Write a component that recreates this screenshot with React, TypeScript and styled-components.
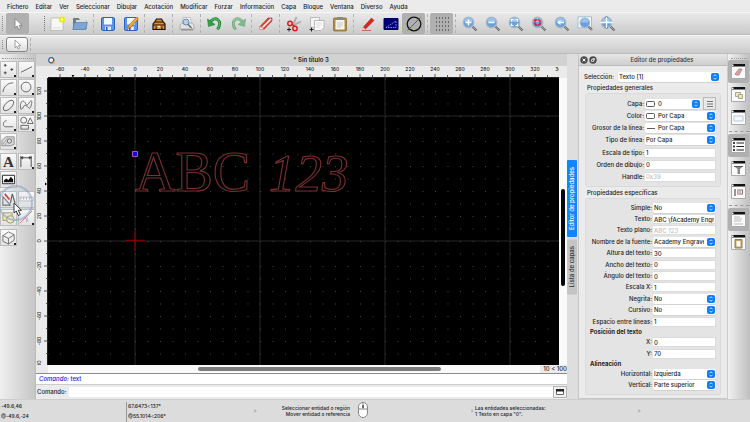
import React from "react";
import styled, { createGlobalStyle, css } from "styled-components";

const Global = createGlobalStyle`
  *, *::before, *::after { box-sizing: border-box; }
  body { margin: 0; background: #dcdcdc; }
  button, input, select { font: inherit; color: inherit; margin: 0; padding: 0; border: 0; background: none; border-radius: 0; }
`;

const Page = styled.div`
  display: flex;
  flex-direction: column;
  min-height: 100vh;
  overflow: hidden;
  font-family: Inter, "Liberation Sans", sans-serif;
  font-size: 6px;
  font-weight: 500;
  line-height: 8px;
  color: #1c1c1c;
`;

/* ---------- menu bar and toolbars ---------- */

const MenuBar = styled.nav`
  display: flex;
  gap: 7px;
  height: 12px;
  padding: 1px 7px 0;
  background: #ebebeb;
`;

const MenuItem = styled.button`
  line-height: 9px;
  white-space: nowrap;
`;

const Toolbar = styled.div`
  display: flex;
  align-items: stretch;
  height: 23px;
  padding-left: 2px;
  background: linear-gradient(#e9e9e9, #cbcbcb);
  border-top: 1px solid #f5f5f5;
  border-bottom: 1px solid #bdbdbd;
`;

const OptionsBar = styled(Toolbar)`
  height: 19px;
  padding: 1px 2px;
`;

const ToolButton = styled.button<{ $active?: boolean }>`
  display: flex;
  align-items: center;
  justify-content: center;
  flex: none;
  width: 23px;
  border-radius: 2px;
  background: ${(p) => (p.$active ? "#b0b0b0" : "transparent")};
`;

const OptionButton = styled.button`
  display: flex;
  align-items: center;
  justify-content: center;
  width: 22px;
  border: 1px solid #858585;
  border-radius: 3px;
  background: linear-gradient(#fdfdfd, #dedede);
`;

const Divider = styled.span`
  flex: none;
  width: 1px;
  margin: 1px 2px;
  border-left: 1px dashed #b0b0b0;
`;

const Grip = styled.span<{ $end?: boolean }>`
  flex: none;
  width: ${(p) => (p.$end ? 16 : 4)}px;
  margin: 3px 0;
  border-right: ${(p) => (p.$end ? "1px dotted #777" : 0)};
  border-left: ${(p) => (p.$end ? 0 : "1px dotted #888")};
`;

/* ---------- main area ---------- */

const Main = styled.main`
  display: flex;
  flex: 1;
  min-height: 0;
`;

const Palette = styled.aside`
  display: flex;
  flex-direction: column;
  flex: none;
  position: relative;
  width: 36px;
  padding-top: 7px;
  background: linear-gradient(90deg, #efefef, #c6c6c6);
  border-right: 1px solid #bbb;
`;

const PaletteGrip = styled.span`
  width: 32px;
  margin: -3px 2px 2px;
  border-top: 1px dotted #999;
`;

const PaletteGroup = styled.div`
  display: grid;
  grid-template-columns: 17px 17px;
  grid-auto-rows: 17px;
  gap: 1px;
  margin-bottom: 3px;
`;

const PaletteButton = styled.button<{ $corner?: boolean }>`
  display: flex;
  align-items: center;
  justify-content: center;
  border: 1px solid #bdbdbd;
  background: ${(p) =>
    p.$corner
      ? "linear-gradient(#222, #222) 13px 13px / 2px 2px no-repeat, linear-gradient(#fafafa, #e3e3e3)"
      : "linear-gradient(#fafafa, #e3e3e3)"};
`;

const Pointer = styled.div`
  position: absolute;
  left: -2px;
  top: 131px;
  width: 35px;
  height: 36px;
  border: 2px solid rgba(125, 155, 190, 0.5);
  border-radius: 50%;
  background: rgba(190, 205, 220, 0.15);
  svg { position: absolute; left: 13px; top: 15px; }
`;

const Document = styled.section`
  display: flex;
  flex-direction: column;
  flex: 1;
  min-width: 0;
`;

const DocTitle = styled.header`
  display: flex;
  align-items: center;
  height: 12px;
  padding: 0 12px;
  background: #d2d2d2;
  span { flex: 1; text-align: center; padding-left: 12px; font-weight: 600; }
`;

const Drawing = styled.div`
  display: grid;
  grid-template-columns: 12px minmax(0, 1fr) 8px;
  grid-template-rows: 12px minmax(0, 1fr) 8px;
  flex: 1;
  min-height: 0;
  background: #ebebeb;
`;

const TopRuler = styled.svg`
  grid-column: 1 / 3;
  width: 100%;
  height: 12px;
  font-size: 5px;
`;

const SideRuler = styled.svg`
  grid-column: 1;
  width: 12px;
  height: 100%;
  font-size: 5px;
`;

const Canvas = styled.svg`
  width: 100%;
  height: 100%;
  background: #000;
`;

const VScroll = styled.div`
  display: flex;
  justify-content: center;
  padding-top: 111px;
  background: #fafafa;
  &::before { content: ""; width: 4px; height: 55%; border-radius: 2px; background: #050505; }
`;

const BottomRow = styled.div`
  grid-column: 1 / -1;
  display: flex;
  align-items: center;
`;

const HScroll = styled.div`
  flex: 1;
  height: 8px;
  margin-left: 12px;
  padding: 2px 0 2px 150px;
  background: #fafafa;
  &::before { content: ""; display: block; width: 71%; height: 4px; border-radius: 2px; background: #7d7d7d; }
`;

const ZoomInfo = styled.span`
  width: 27px;
  text-align: right;
  white-space: nowrap;
`;

const History = styled.div`
  height: 12px;
  padding: 1px 3px;
  border-top: 1px solid #8b8b8b;
  border-bottom: 1px solid #ccc;
  background: #fff;
  color: #1a12d8;
`;

const CommandLine = styled.label`
  display: flex;
  align-items: center;
  height: 14px;
  padding-left: 1px;
  background: #ebebeb;
  input { flex: 1; min-width: 0; height: 10px; margin-left: 2px; background: #fff; }
`;

const CommandButton = styled.button`
  display: flex;
  align-items: center;
  justify-content: center;
  width: 14px;
  height: 12px;
  border: 1px solid #b5b5b5;
  background: #f0f0f0;
`;

/* ---------- dock ---------- */

const SideTabs = styled.div`
  display: flex;
  flex-direction: column;
  flex: none;
  gap: 2px;
  width: 11px;
  padding-top: 106px;
  background: #dedede;
`;

const SideTab = styled.button<{ $active?: boolean }>`
  writing-mode: vertical-rl;
  transform: rotate(180deg);
  width: 10px;
  padding: 7px 0;
  line-height: 10px;
  text-align: center;
  border-radius: 1px;
  background: ${(p) => (p.$active ? "#1285fb" : "#c4c4c4")};
  color: ${(p) => (p.$active ? "#fff" : "#333")};
`;

const Dock = styled.section`
  display: flex;
  flex-direction: column;
  flex: none;
  width: 149px;
  border-left: 1px solid #c6c6c6;
  border-bottom: 1px solid #c6c6c6;
  background: #ebebeb;
`;

const DockTitle = styled.header`
  display: flex;
  align-items: center;
  gap: 1px;
  height: 12px;
  padding: 0 1px;
  background: linear-gradient(#e6e6e6, #cfcfcf);
  border-bottom: 1px solid #bbb;
  color: #3a3a3a;
  button { display: flex; }
  span { flex: 1; text-align: center; }
`;

const Selection = styled.label`
  display: flex;
  align-items: center;
  height: 10px;
  margin: 6px 7px 0 5px;
  gap: 4px;
`;

const GroupTitle = styled.h2`
  margin: 2px 8px 1px;
  font-size: 6px;
  line-height: 8px;
  font-weight: 500;
`;

const Group = styled.div<{ $rows: number; $gap?: boolean }>`
  display: flex;
  flex-direction: column;
  flex: ${(p) => p.$rows} 1 0;
  margin: 0 6px ${(p) => (p.$gap ? 0 : 3)}px 6px;
  padding: 3px 4px;
  border: 1px solid #dadada;
  border-radius: 3px;
  background: #e4e4e4;
`;

const Row = styled.label<{ $labelWidth: number }>`
  display: grid;
  grid-template-columns: ${(p) => p.$labelWidth}px minmax(0, 1fr);
  flex: 1 1 0;
  align-items: center;
  column-gap: 1px;
  > span { justify-self: end; white-space: nowrap; }
`;

const SubTitle = styled.h3`
  flex: none;
  margin: 0;
  font-size: 6px;
  line-height: 9px;
  font-weight: 700;
`;

const Field = styled.input`
  width: 100%;
  height: 10px;
  padding: 0 1px;
  background: #fff;
  border: 1px solid #dcdcdc;
  border-left: 0;
  &:disabled { color: #c0c0c0; }
`;

const SelectBox = styled.div`
  display: grid;
  align-items: center;
  flex: 1;
  min-width: 0;
  height: 10px;
  border-radius: 2px;
  background: #fff;
  box-shadow: 0 1px 0 #d2d2d2;
  > * { grid-area: 1 / 1; }
  > svg { pointer-events: none; z-index: 1; }
  > svg:last-child { justify-self: end; margin-right: 1px; }
`;

const Select = styled.select<{ $icon?: boolean }>`
  appearance: none;
  width: 100%;
  height: 10px;
  padding: 0 12px 0 ${(p) => (p.$icon ? 13 : 1)}px;
  overflow: hidden;
  text-overflow: clip;
  outline: none;
`;

const LayerControls = styled.div`
  display: flex;
  align-items: center;
  gap: 2px;
`;

const LayerButton = styled.button`
  display: flex;
  align-items: center;
  justify-content: center;
  width: 13px;
  height: 13px;
  border: 1px solid #bbb;
  background: #e8e8e8;
`;

const RightBar = styled.aside`
  display: flex;
  flex-direction: column;
  flex: none;
  width: 23px;
  padding-top: 6px;
  background: linear-gradient(90deg, #f0f0f0, #bfbfbf);
  border-left: 1px solid #ccc;
`;

const RightButton = styled(ToolButton)`
  width: 21px;
  height: 23px;
`;

const RightDivider = styled.span<{ $first?: boolean }>`
  height: 1px;
  margin: ${(p) => (p.$first ? "-2px 3px 1px" : "2px 1px")};
  border-top: 1px ${(p) => (p.$first ? "dotted" : "dashed")} #999;
`;

/* ---------- status bar ---------- */

const Status = styled.footer`
  display: grid;
  grid-template-columns: 126px 128px minmax(0, 96px) minmax(0, 121px) minmax(0, 1fr) minmax(0, 112px);
  height: 23px;
  padding-top: 2px;
  background: #dcdcdc;
  border-top: 1px solid #cdcdcd;
  font-size: 5px;
  white-space: nowrap;
`;

const StatusCell = styled.div<{ $kind?: "line" | "dot" | "hint" | "mouse" }>`
  display: grid;
  grid-auto-rows: 6px;
  row-gap: ${(p) => (!p.$kind || p.$kind === "line" ? 4 : 0)}px;
  line-height: 6px;
  align-content: start;
  padding: 1px 1px 0;
  ${(p) => p.$kind === "line" && css`border-left: 1px solid #999;`}
  ${(p) => p.$kind === "hint" && css`text-align: right; padding: 3px 0 0;`}
  ${(p) => p.$kind === "mouse" && css`padding: 0 8px;`}
  ${(p) =>
    (p.$kind === "dot" || p.$kind === "hint") &&
    css`background: radial-gradient(circle at 1px 9px, #bcbcbc 1px, transparent 2px);`}
  ${(p) => p.$kind === "dot" && css`padding: 3px 0 0 4px;`}
`;

/* ---------- icons ---------- */

type SvgProps = { children: React.ReactNode; size?: number };
const Icon = ({ children, size = 16 }: SvgProps) => (
  <svg width={size} height={size} viewBox="0 0 16 16" fill="none" aria-hidden="true">
    {children}
  </svg>
);

const Arrow = () => (
  <path d="M5 2.500V12l2.200-2 1.500 3.500 2-.9-1.500-3.300h2.900z" fill="#fff" stroke="#777" strokeWidth=".8" />
);
const Magnifier = ({ children }: { children?: React.ReactNode }) => (
  <>
    <path d="M10 10l4.500 4.500" stroke="#666c70" strokeWidth="2.200" />
    <path d="M10 10l4.500 4.500" stroke="#b6babc" strokeWidth=".7" />
    <circle cx="6.500" cy="6.500" r="5.300" fill="#6aa0dc" stroke="#a9b8c6" strokeWidth="1.200" />
    <path d="M2.500 6a4 4 0 018 0z" fill="#9cc4f0" />
    {children}
  </>
);
const Disk = () => (
  <>
    <rect x="1.500" y="1.500" width="13" height="13" rx="1.500" fill="#5b93ee" stroke="#2f62bd" />
    <path d="M4 2h8v6.500H4z" fill="#f4f7fc" />
    <path d="M5 10.500h6V14H5z" fill="#dfe6ee" />
    <path d="M6 11h1.500v3H6z" fill="#2356b0" />
  </>
);
const Curl = () => (
  <>
    <path d="M3 6.500C7-1 17 4 10.500 13.500" stroke="#1c7a32" strokeWidth="3" />
    <path d="M3 6.500C7-1 17 4 10.500 13.500" stroke="#4bb560" strokeWidth="1.600" />
    <path d="M.5 3l1 7.500 6.500-2z" fill="#35a04c" stroke="#1c7a32" strokeWidth=".6" />
  </>
);

const icons: Record<string, React.ReactNode> = {
  pointer: <Arrow />,
  new: (
    <>
      <path d="M2 2h12v12.500H2z" fill="#f7f7f5" stroke="#b5b5b0" strokeWidth=".8" />
      <path d="M4 12h8" stroke="#ddd" />
      <circle cx="13" cy="3.500" r="3" fill="#f0e800" />
      <circle cx="13" cy="3.500" r="1.200" fill="#ffffb0" />
    </>
  ),
  open: (
    <>
      <path d="M1.500 13V2.500h5l1.500 2h6V13z" fill="#777d82" stroke="#5b6064" strokeWidth=".7" />
      <path d="M4 4h10v5H4z" fill="#d8dde2" />
      <path d="M.8 13.500l1.500-7h13l-1.500 7z" fill="#7ba6d3" stroke="#5480a9" strokeWidth=".7" />
    </>
  ),
  save: <Disk />,
  saveAs: (
    <>
      <Disk />
      <path d="M5 12.500l1-3.500 7.500-8 2 2-7.500 8z" fill="#f2a72e" stroke="#a65d12" strokeWidth=".6" />
    </>
  ),
  bug: (
    <>
      <path d="M4 5.500L5.500 3h5L12 5.500l2 2.500v5.500H2V8z" fill="#e58a24" stroke="#111" strokeWidth="1.200" />
      <path d="M4 6h8M2.500 9h11M4.500 11h2m3 0h2M5 13v-1m6 1v-1" stroke="#111" strokeWidth="1.200" />
      <path d="M6.500 9.800h3v1.500h-3z" fill="#fff3d0" />
    </>
  ),
  print: (
    <>
      <path d="M4 1.500h7l1.500 6h-9z" fill="#f6f6f6" stroke="#aaa" strokeWidth=".6" />
      <path d="M1 9l2-2h10l2 2v4H1z" fill="#e2e2e2" stroke="#a5a5a5" strokeWidth=".8" />
      <path d="M2 13h12v1.500H2z" fill="#959595" />
      <circle cx="7" cy="6" r="3" fill="#b4cfee" stroke="#6b8db2" />
      <path d="M9 8.500l3.500 3.500" stroke="#666" strokeWidth="1.400" />
    </>
  ),
  undo: <Curl />,
  redo: (
    <g transform="translate(16 0) scale(-1 1)" opacity=".55">
      <Curl />
    </g>
  ),
  eraser: (
    <>
      <path d="M2 10.500l8-8.500h4v3l-8 8.500H2z" fill="#e0453c" stroke="#a22c24" strokeWidth=".6" />
      <path d="M4.500 11.500L13 3" stroke="#fff" strokeWidth="1.600" />
      <path d="M2 10.500l4 3H2z" fill="#fff" stroke="#b88" strokeWidth=".4" />
    </>
  ),
  cut: (
    <>
      <path d="M7 9L10.500 1M8 9l7-3.500" stroke="#aaa" strokeWidth="1.800" />
      <circle cx="4" cy="7.500" r="2.200" stroke="#d42020" strokeWidth="1.500" />
      <circle cx="9" cy="12.500" r="2.200" stroke="#d42020" strokeWidth="1.500" />
      <path d="M6 8.500l3 2" stroke="#d42020" strokeWidth="1.500" />
      <path d="M1 13.500h4m-2-2v4" stroke="#111" strokeWidth=".9" />
    </>
  ),
  copy: (
    <>
      <path d="M1.500 1.500h9v10h-9z" fill="#f4f4f4" stroke="#b0b0b0" strokeWidth=".8" />
      <path d="M5.500 4.500h9.500v7l-3 3H5.500z" fill="#fff" stroke="#a8a8a8" strokeWidth=".8" />
      <path d="M7 7h6M7 9h6M7 11h4" stroke="#c9c9c9" strokeWidth=".7" />
      <path d="M.5 13.500h4m-2-2v4" stroke="#111" strokeWidth=".9" />
    </>
  ),
  paste: (
    <>
      <rect x="1.500" y="2" width="13" height="13" rx="1" fill="#b68a42" stroke="#85622a" strokeWidth=".7" />
      <path d="M3.500 4h9v9.500h-9z" fill="#f4f4f0" />
      <path d="M5 1h6v3H5z" fill="#888" />
      <path d="M5 7h6M5 9h6M5 11h4" stroke="#bbb" strokeWidth=".8" />
    </>
  ),
  pencil: (
    <>
      <path d="M3 11.500L11.500 2 14 4.500 5.500 13z" fill="#d9261e" stroke="#8f1712" strokeWidth=".5" />
      <path d="M2 13.500l1-2.500 2.500 2.200z" fill="#e8c28a" />
      <path d="M2 14.500h9" stroke="#c33" strokeWidth=".7" />
    </>
  ),
  draft: (
    <>
      <path d="M1 2.500h14v11H1z" fill="#00007c" stroke="#000058" />
      <path d="M3 11.500L13 5v6.500z" stroke="#cfd2ff" strokeWidth=".7" strokeDasharray="1.500 1" />
    </>
  ),
  circleLine: (
    <>
      <circle cx="8" cy="8" r="6.800" stroke="#111" strokeWidth="1.300" />
      <path d="M1.500 14.500l13-13" stroke="#3a3ad0" strokeWidth=".8" />
    </>
  ),
  grid: <path d="M2.500 1v14M5.500 1v14M8.500 1v14M11.500 1v14M14.500 1v14" stroke="#6a6a6a" strokeWidth="1" strokeDasharray="2 2" />,
  zoomIn: <Magnifier><path d="M3.500 6.500h6m-3-3v6" stroke="#fff" strokeWidth="1.500" /></Magnifier>,
  zoomOut: <Magnifier><path d="M3.500 6.500h6" stroke="#fff" strokeWidth="1.500" /></Magnifier>,
  zoomAuto: <Magnifier><path d="M3.500 5.500v-2h2m2 0h2v2m0 2v2h-2m-2 0h-2v-2" stroke="#fff" strokeWidth="1.200" /></Magnifier>,
  zoomSel: <Magnifier><path d="M4 4h5v5H4z" stroke="#e3122b" strokeWidth="1.600" strokeDasharray="2 .6" /></Magnifier>,
  zoomPrev: <Magnifier><path d="M10 6.500H6" stroke="#fff" strokeWidth="1.500" /><path d="M3 6.500L6.500 4v5z" fill="#fff" /></Magnifier>,
  zoomWin: (
    <>
      <path d="M1 .8h13.500v11H1z" fill="#f5f8fc" stroke="#a3bedb" />
      <g transform="translate(2 1) scale(.9)"><Magnifier /></g>
    </>
  ),
  pan: (
    <Magnifier>
      <path d="M.5 6.500h12m-6-6v12" stroke="#fff" strokeWidth="1.300" />
      <path d="M5 2l1.500-2L8 2M5 11l1.500 2L8 11" stroke="#5b87bd" />
    </Magnifier>
  ),
  points: <path d="M3 3.500h3M4.500 2v3M10 8h3m-1.500-1.500v3M3 11.500h3M4.500 10v3" stroke="#333" strokeWidth=".9" />,
  line: <path d="M2 11L14 5" stroke="#555" strokeWidth=".9" />,
  arc: <path d="M2 13C3 7 7 3 13 3" stroke="#555" strokeWidth=".9" />,
  circle: <circle cx="7.500" cy="7.500" r="5.200" stroke="#555" strokeWidth=".9" />,
  ellipse: <ellipse cx="8" cy="8" rx="7" ry="3.500" transform="rotate(-45 8 8)" stroke="#555" strokeWidth=".9" />,
  spline: <path d="M2 12C0 3 5 1 7 6s4-3 6-3-1 9-2 8-5-5-6-2-3 3-3 3z" stroke="#555" strokeWidth=".9" />,
  poly: <path d="M6 5C2 5 1 11.500 5 11.500h8" stroke="#555" strokeWidth=".9" />,
  shapes: (
    <>
      <circle cx="5" cy="4.500" r="3.200" stroke="#555" strokeWidth=".9" />
      <path d="M9 8l3-6 3 6zM2 10h8v4H2z" stroke="#555" strokeWidth=".9" />
    </>
  ),
  hatch: (
    <>
      <path d="M1 12.500V7l4-4h9v8l-4 1.500z" fill="#ddd" stroke="#777" strokeWidth=".8" />
      <circle cx="9" cy="7.500" r="2.300" stroke="#666" />
      <path d="M2 11l5-7M4 12l2-3M11 4l2 2" stroke="#888" strokeWidth=".7" />
    </>
  ),
  dimension: <path d="M2 14V2M13 14V2M2 4h11M2 4l2-1.200v2.400zM13 4l-2-1.200v2.400z" stroke="#333" strokeWidth=".9" />,
  image: (
    <>
      <path d="M1.500 3.500h13v9h-13z" fill="#fff" stroke="#222" />
      <path d="M3 11V9l2.500-2L8 8.500 10.500 5l2.500 3v3z" fill="#111" />
    </>
  ),
  modify: (
    <>
      <path d="M2 5v9h8z" stroke="#666" strokeWidth="1.100" />
      <path d="M4 2l5 6" stroke="#d22" strokeWidth="1.800" />
      <path d="M12 2l-2 10M12 2l3 10" stroke="#555" strokeWidth="1.300" />
    </>
  ),
  measure: (
    <>
      <path d="M0 5.500h15v4H0z" fill="#fff" stroke="#aaa" strokeWidth=".8" />
      <path d="M2 6v2m3-2v2m3-2v2m3-2v2" stroke="#777" strokeWidth=".7" />
    </>
  ),
  block: (
    <>
      <path d="M2 3h10v8H2z" fill="#f0e9c4" stroke="#999168" />
      <circle cx="10" cy="10" r="4" fill="#f0e9c4" stroke="#999168" />
    </>
  ),
  explode: (
    <>
      <path d="M1 14L14 1" stroke="#dd6a6a" />
      <path d="M6 8l4 4M9 8l-1 5" stroke="#aaa" />
    </>
  ),
  box: <path d="M2 6l6-4 6 3v6l-6 4-6-3zM2 6l6 3 6-4M8 9v6" stroke="#666" strokeWidth=".9" />,
};

const Win = ({ children }: { children?: React.ReactNode }) => (
  <svg width="15" height="15" viewBox="0 0 15 15" fill="none" aria-hidden="true">
    <path d="M.5.5h14v14H.5z" fill="#fbfbfb" stroke="#aaa" />
    <path d="M1 0h13v2.500H1z" fill="#111" />
    <path d="M1 .5h1.500V2H1z" fill="#fff" />
    {children}
  </svg>
);
const winArt: Record<string, React.ReactNode> = {
  eraser: <path d="M4 10l4-5h3l-3 6H5z" fill="#e99" stroke="#999" />,
  blocks: (
    <>
      <path d="M4.500 5.500h5v4h-5z" fill="#eee6bd" stroke="#a8a58f" />
      <path d="M7.500 7.500h4v4h-4z" fill="#eee6bd" stroke="#a8a58f" />
    </>
  ),
  view: <path d="M3 6h9v5H3z" fill="#f4f8ff" stroke="#b8c8dc" />,
  list: (
    <>
      <path d="M2 4h2v2H2zM2 7.500h2v2H2zM2 11h2v2H2z" fill="#444" />
      <path d="M5.500 5H13M5.500 8.500H13M5.500 12H13" stroke="#222" strokeWidth="1.200" />
    </>
  ),
  filter: (
    <>
      <path d="M3 5h9L9 8v5H6.500V8z" fill="#888" />
      <path d="M3 5.500h9" stroke="#555" />
    </>
  ),
  align: (
    <>
      <path d="M4 5v7" stroke="#333" />
      <path d="M6 6h5M6 8h4M6 10h5" stroke="#955" strokeWidth=".9" />
      <path d="M11.500 5.500v5" stroke="#777" />
    </>
  ),
  text: <path d="M3 5h6M3 7h8M3 9h7M3 12h9" stroke="#aaa" strokeWidth=".8" />,
  clip: (
    <>
      <path d="M4 4.500h7V13H4z" fill="#c9a063" stroke="#9a7d4e" />
      <path d="M5.500 6h4v5.500h-4z" fill="#fff" />
    </>
  ),
};

const Chevrons = () => (
  <svg width="8" height="8" viewBox="0 0 8 8" fill="none" aria-hidden="true">
    <rect width="8" height="8" rx="2" fill="#0a7cff" />
    <path d="M2.500 3.200L4 1.700l1.500 1.500M2.500 4.800L4 6.300l1.500-1.500" stroke="#fff" strokeWidth=".8" />
  </svg>
);
const Swatch = ({ line }: { line?: boolean }) => (
  <svg width="12" height="8" viewBox="0 0 12 8" fill="none" aria-hidden="true">
    {line ? (
      <path d="M2 4.500h8" stroke="#333" strokeWidth=".8" />
    ) : (
      <rect x="1.500" y="1.500" width="8" height="5" rx="1" fill="#fff" stroke="#333" strokeWidth=".8" />
    )}
  </svg>
);

/* ---------- data ---------- */

const menus = ["Fichero", "Editar", "Ver", "Seleccionar", "Dibujar", "Acotación", "Modificar", "Forzar", "Información", "Capa", "Bloque", "Ventana", "Diverso", "Ayuda"];

const toolGroups = [
  ["new", "open"], ["save", "saveAs"], ["bug"], ["print"], ["undo", "redo"], ["eraser"],
  ["cut", "copy", "paste"], ["pencil", "draft", "circleLine"], ["grid"],
  ["zoomIn", "zoomOut", "zoomAuto", "zoomSel", "zoomPrev", "zoomWin", "pan"],
];

const paletteGroups = [
  ["points", "line", "arc", "circle", "ellipse", "spline", "poly", "shapes", "hatch"],
  ["letter", "dimension", "image"],
  ["modify", "measure", "block", "explode"],
  ["box"],
];
const plain = ["letter", "image", "modify", "measure", "block"];

const rightGroups = [["eraser", "blocks", "view"], ["list", "filter", "align"], ["text", "clip"]];
const rightActive = ["eraser", "list", "text"];

type Prop = { label: string; value: string; kind?: "select" | "muted"; icon?: "box" | "line" };

const generalProps: Prop[] = [
  { label: "Color:", value: "Por Capa", kind: "select", icon: "box" },
  { label: "Grosor de la línea:", value: "Por Capa", kind: "select", icon: "line" },
  { label: "Tipo de línea:", value: "Por Capa", kind: "select" },
  { label: "Escala de tipo:", value: "1" },
  { label: "Orden de dibujo:", value: "0" },
  { label: "Handle:", value: "0x39", kind: "muted" },
];
const textProps: Prop[] = [
  { label: "Simple:", value: "No", kind: "select" },
  { label: "Texto:", value: "ABC \\fAcademy Engraved" },
  { label: "Texto plano:", value: "ABC 123", kind: "muted" },
  { label: "Nombre de la fuente:", value: "Academy Engraved", kind: "select" },
  { label: "Altura del texto:", value: "30" },
  { label: "Ancho del texto:", value: "0" },
  { label: "Ángulo del texto:", value: "0" },
  { label: "Escala X:", value: "1" },
  { label: "Negrita:", value: "No", kind: "select" },
  { label: "Cursivo:", value: "No", kind: "select" },
  { label: "Espacio entre líneas:", value: "1" },
];
const positionProps: Prop[] = [{ label: "X:", value: "0" }, { label: "Y:", value: "70" }];
const alignProps: Prop[] = [
  { label: "Horizontal:", value: "Izquierda", kind: "select" },
  { label: "Vertical:", value: "Parte superior", kind: "select" },
];

const GENERAL_LABEL = 54;
const TEXT_LABEL = 62;

type DropdownProps = { value: string; icon?: "box" | "line"; label?: string };
const Dropdown = ({ value, icon, label }: DropdownProps) => (
  <SelectBox>
    {icon && <Swatch line={icon === "line"} />}
    <Select $icon={!!icon} defaultValue={value} aria-label={label}>
      <option>{value}</option>
    </Select>
    <Chevrons />
  </SelectBox>
);

const PropRows = ({ items, labelWidth }: { items: Prop[]; labelWidth: number }) => (
  <>
    {items.map((p) => (
      <Row key={p.label} $labelWidth={labelWidth}>
        <span>{p.label}</span>
        {p.kind === "select" ? (
          <Dropdown value={p.value} icon={p.icon} />
        ) : (
          <Field defaultValue={p.value} disabled={p.kind === "muted"} />
        )}
      </Row>
    ))}
  </>
);

/* ---------- drawing area ---------- */

const UNIT = 1.25;
const ORIGIN = { x: 87, y: 163 };
const steps = (from: number, to: number, by: number) =>
  Array.from({ length: Math.floor((to - from) / by) + 1 }, (_, i) => from + i * by);

const HorizontalRuler = () => (
  <TopRuler>
    <path d="M12 11.500H2000" stroke="#222" />
    {steps(-60, 900, 10).map((v) => (
      <path key={v} d={`M${12 + ORIGIN.x + v * UNIT} ${v % 20 ? 9 : 8}V12`} stroke="#333" strokeWidth=".8" />
    ))}
    {steps(-60, 340, 20).map((v) => (
      <text key={v} x={12 + ORIGIN.x + v * UNIT} y="5" textAnchor="middle" fill="#222">{v}</text>
    ))}
    <path d="M35.500 9h3l-1.500 2z" fill="#000" />
  </TopRuler>
);

const VerticalRuler = () => (
  <SideRuler>
    <path d="M11.500 0V2000" stroke="#222" />
    {steps(-900, 120, 10).map((v) => (
      <path key={v} d={`M${v % 20 ? 10 : 8} ${ORIGIN.y - v * UNIT}h4`} stroke="#333" strokeWidth=".8" />
    ))}
    {steps(-100, 120, 20).map((v) => (
      <text key={v} transform={`translate(5 ${ORIGIN.y - v * UNIT}) rotate(-90)`} textAnchor="middle" fill="#333">{v}</text>
    ))}
    <path d="M9 104.500v3l2-1.500z" fill="#000" />
  </SideRuler>
);

const DrawingCanvas = () => (
  <Canvas>
    <defs>
      <pattern id="dots" x={ORIGIN.x} y={ORIGIN.y} width="12.500" height="12.500" patternUnits="userSpaceOnUse">
        <rect width="1" height="1" fill="#464646" />
      </pattern>
      <pattern id="major" x={ORIGIN.x - 1} y={ORIGIN.y - 1} width="125" height="125" patternUnits="userSpaceOnUse">
        <path d="M0 1h125M1 0v125" stroke="#131313" strokeWidth="2" />
      </pattern>
    </defs>
    <rect width="100%" height="100%" fill="url(#major)" />
    <rect width="100%" height="100%" fill="url(#dots)" />
    <path d="M77 162.500h20M87 153v20" stroke="#7a0000" strokeWidth="1.500" />
    <g fontFamily="'Liberation Serif', serif" fontWeight="400" fill="#000" stroke="#7c3030" strokeWidth="1.100">
      <text x="87" y="113" fontSize="56">ABC</text>
      <text x="221" y="113" fontSize="53" fontStyle="italic">123</text>
    </g>
    <path d="M84.500 73.500h5v5h-5z" fill="#0a0ad0" stroke="#b050c8" />
  </Canvas>
);

export default function App() {
  return (
    <Page>
      <Global />
      <MenuBar>{menus.map((m) => <MenuItem key={m}>{m}</MenuItem>)}</MenuBar>
      <Toolbar>
        <Grip />
        <ToolButton $active aria-label="pointer"><Icon>{icons.pointer}</Icon></ToolButton>
        <Grip $end />
        {toolGroups.map((group, i) => (
          <React.Fragment key={i}>
            {i > 0 && <Divider />}
            {group.map((name) => (
              <ToolButton key={name} $active={name === "circleLine" || name === "grid"} aria-label={name}>
                <Icon>{icons[name]}</Icon>
              </ToolButton>
            ))}
          </React.Fragment>
        ))}
      </Toolbar>
      <OptionsBar>
        <Grip />
        <OptionButton aria-label="pointer options"><Icon size={13}>{icons.pointer}</Icon></OptionButton>
        <Divider />
      </OptionsBar>

      <Main>
        <Palette>
          <PaletteGrip />
          {paletteGroups.map((group, i) => (
            <PaletteGroup key={i}>
              {group.map((name) => (
                <PaletteButton key={name} aria-label={name} $corner={!plain.includes(name)}>
                  {name === "letter" ? (
                    <Icon size={15}>
                      <text x="8" y="13.500" textAnchor="middle" fontFamily="'Liberation Serif', serif" fontWeight="700" fontSize="16" fill="#333">A</text>
                    </Icon>
                  ) : (
                    <Icon size={15}>{icons[name]}</Icon>
                  )}
                </PaletteButton>
              ))}
            </PaletteGroup>
          ))}
          <Pointer>
            <svg width="10" height="15" viewBox="0 0 10 15" aria-hidden="true">
              <path d="M1 1v10l2.300-2 2 4.500 2-.9-2-4.300h3.200z" fill="#fff" stroke="#222" strokeWidth=".9" />
            </svg>
          </Pointer>
        </Palette>

        <Document>
          <DocTitle>
            <svg width="7" height="7" viewBox="0 0 7 7" fill="none" aria-hidden="true">
              <circle cx="3.300" cy="3.300" r="2.600" fill="#fff" stroke="#33558f" strokeWidth="1.200" />
              <path d="M3.500 3.500l3 3" stroke="#e3a02c" strokeWidth="1.300" />
            </svg>
            <span>* Sin título 3</span>
          </DocTitle>
          <Drawing>
            <HorizontalRuler />
            <VerticalRuler />
            <DrawingCanvas />
            <VScroll />
            <BottomRow>
              <HScroll />
              <ZoomInfo>10 &lt; 100</ZoomInfo>
            </BottomRow>
          </Drawing>
          <History><i>Comando:</i> text</History>
          <CommandLine>
            Comando:
            <input />
            <CommandButton aria-label="history">
              <svg width="8" height="6" viewBox="0 0 8 6" aria-hidden="true">
                <path d="M.5.5h7v5h-7z" fill="#fff" stroke="#666" />
                <path d="M0 0h8v2.500H0z" fill="#222" />
              </svg>
            </CommandButton>
          </CommandLine>
        </Document>

        <SideTabs>
          <SideTab $active>Editor de propiedades</SideTab>
          <SideTab>Lista de capas</SideTab>
        </SideTabs>

        <Dock>
          <DockTitle>
            {["close", "float"].map((name) => (
              <button key={name} aria-label={name}>
                <svg width="8" height="8" viewBox="0 0 8 8" fill="none" aria-hidden="true">
                  <circle cx="4" cy="4" r="3.700" fill="#4a4a4a" />
                  {name === "close" ? (
                    <path d="M2.500 2.500l3 3m0-3l-3 3" stroke="#fff" />
                  ) : (
                    <path d="M2.500 3.500h2v2h-2zM3.500 2.500h2v2" stroke="#fff" strokeWidth=".7" />
                  )}
                </svg>
              </button>
            ))}
            <span>Editor de propiedades</span>
          </DockTitle>
          <Selection>
            <span>Selección:</span>
            <Dropdown value="Texto [1]" />
          </Selection>
          <GroupTitle>Propiedades generales</GroupTitle>
          <Group $rows={15} $gap>
            <Row as="div" $labelWidth={GENERAL_LABEL}>
              <span>Capa:</span>
              <LayerControls>
                <Dropdown value="0" icon="box" label="Capa" />
                <LayerButton aria-label="Capas">
                  <svg width="8" height="8" viewBox="0 0 8 8" aria-hidden="true">
                    <path d="M1 1.500h6M1 4h6M1 6.500h6" stroke="#777" />
                  </svg>
                </LayerButton>
              </LayerControls>
            </Row>
            <PropRows items={generalProps} labelWidth={GENERAL_LABEL} />
          </Group>
          <GroupTitle>Propiedades específicas</GroupTitle>
          <Group $rows={33}>
            <PropRows items={textProps} labelWidth={TEXT_LABEL} />
            <SubTitle>Posición del texto</SubTitle>
            <PropRows items={positionProps} labelWidth={TEXT_LABEL} />
            <SubTitle>Alineación</SubTitle>
            <PropRows items={alignProps} labelWidth={TEXT_LABEL} />
          </Group>
        </Dock>

        <RightBar>
          <RightDivider $first />
          {rightGroups.map((group, i) => (
            <React.Fragment key={i}>
              {i > 0 && <RightDivider />}
              {group.map((name) => (
                <RightButton key={name} $active={rightActive.includes(name)} aria-label={name}>
                  <Win>{winArt[name]}</Win>
                </RightButton>
              ))}
            </React.Fragment>
          ))}
        </RightBar>
      </Main>

      <Status>
        <StatusCell><span>-49.6,46</span><span>@-49.6,-24</span></StatusCell>
        <StatusCell $kind="line"><span>67.6473&lt;137°</span><span>@55.1014&lt;206°</span></StatusCell>
        <StatusCell $kind="hint"><span>Seleccionar entidad o región</span><span>Mover entidad o referencia</span></StatusCell>
        <StatusCell $kind="mouse">
          <svg width="10" height="16" viewBox="0 0 10 16" fill="none" aria-hidden="true">
            <rect x=".5" y=".5" width="9" height="15" rx="4.500" fill="#fff" stroke="#888" />
            <path d="M1 7h8M5 1v6" stroke="#888" />
            <path d="M5 3v3" stroke="#555" strokeWidth="1.500" />
          </svg>
        </StatusCell>
        <StatusCell $kind="dot"><span>Las entidades seleccionadas:</span><span>1 Texto en capa "0".</span></StatusCell>
        <StatusCell $kind="dot" />
      </Status>
    </Page>
  );
}
